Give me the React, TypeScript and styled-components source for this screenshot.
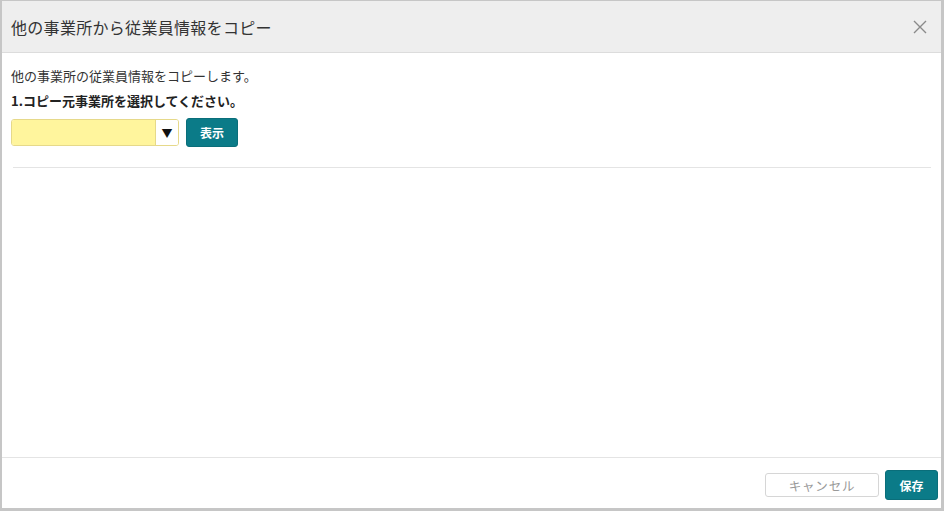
import React from "react";
import styled, { createGlobalStyle } from "styled-components";

const GlobalStyle = createGlobalStyle`
  html, body {
    margin: 0;
    padding: 0;
    background: #c6c6c6;
  }
  body {
    font-family: "Noto Sans CJK JP", "Liberation Sans", sans-serif;
    color: #333;
  }
`;

const Dialog = styled.div`
  box-sizing: border-box;
  width: 939px;
  height: 507px;
  margin: 1px 3px 3px 2px;
  background: #fff;
  display: flex;
  flex-direction: column;
`;

const Header = styled.div`
  box-sizing: border-box;
  height: 52px;
  flex: none;
  display: flex;
  align-items: center;
  justify-content: space-between;
  padding: 0 12px 0 9px;
  background: #eeeeee;
  border-bottom: 1px solid #dcdcdc;
`;

const Title = styled.h1`
  margin: 0;
  font-size: 16px;
  font-weight: 400;
  color: #333;
  letter-spacing: 0.3px;
`;

const CloseButton = styled.button`
  border: none;
  background: none;
  padding: 0;
  width: 18px;
  height: 18px;
  display: flex;
  align-items: center;
  justify-content: center;
  cursor: pointer;
`;

const Body = styled.div`
  flex: 1;
  padding: 14px 9px 0 9px;
  display: flex;
  flex-direction: column;
`;

const Lead = styled.p`
  margin: 0;
  font-size: 13px;
  line-height: 18px;
  color: #333;
`;

const Step = styled.p`
  margin: 7px 0 0 0;
  font-size: 13px;
  font-weight: 700;
  line-height: 18px;
  color: #222;
`;

const Controls = styled.div`
  display: flex;
  align-items: center;
  gap: 7px;
  margin-top: 8px;
`;

const SelectBox = styled.div`
  box-sizing: border-box;
  width: 168px;
  height: 27px;
  display: flex;
  border: 1px solid #e6d98a;
  border-radius: 3px;
  overflow: hidden;
`;

const SelectField = styled.div`
  flex: 1;
  background: #fff59d;
`;

const SelectArrow = styled.div`
  width: 22px;
  background: #fff;
  border-left: 1px solid #e6d98a;
  display: flex;
  align-items: center;
  justify-content: center;
  font-size: 11px;
  color: #111;
`;

const PrimaryButton = styled.button<{ $w: number; $h: number }>`
  box-sizing: border-box;
  width: ${(p) => p.$w}px;
  height: ${(p) => p.$h}px;
  border: 1px solid #0a6e7a;
  border-radius: 3px;
  background: #0b7b88;
  color: #fff;
  font-family: inherit;
  font-size: 12px;
  font-weight: 700;
  padding: 0;
  cursor: pointer;
`;

const Divider = styled.hr`
  margin: 20px 1px 0 2px;
  border: none;
  border-top: 1px solid #e4e4e4;
`;

const Footer = styled.div`
  box-sizing: border-box;
  height: 51px;
  flex: none;
  border-top: 1px solid #e4e4e4;
  display: flex;
  align-items: center;
  justify-content: flex-end;
  gap: 6px;
  padding: 4px 3px 0 0;
`;

const CancelButton = styled.button`
  box-sizing: border-box;
  width: 114px;
  height: 24px;
  border: 1px solid #d6d6d6;
  border-radius: 3px;
  background: #fff;
  color: #999;
  font-family: inherit;
  font-size: 12.5px;
  padding: 0;
  letter-spacing: 0.8px;
`;

export default function App() {
  return (
    <>
      <GlobalStyle />
      <Dialog>
        <Header>
          <Title>他の事業所から従業員情報をコピー</Title>
          <CloseButton aria-label="閉じる">
            <svg width="14" height="14" viewBox="0 0 14 14">
              <path d="M1 1L13 13M13 1L1 13" stroke="#8a8a8a" strokeWidth="1.4" />
            </svg>
          </CloseButton>
        </Header>
        <Body>
          <Lead>他の事業所の従業員情報をコピーします。</Lead>
          <Step>1.コピー元事業所を選択してください。</Step>
          <Controls>
            <SelectBox>
              <SelectField />
              <SelectArrow>▼</SelectArrow>
            </SelectBox>
            <PrimaryButton $w={52} $h={29}>表示</PrimaryButton>
          </Controls>
          <Divider />
        </Body>
        <Footer>
          <CancelButton>キャンセル</CancelButton>
          <PrimaryButton $w={53} $h={30}>保存</PrimaryButton>
        </Footer>
      </Dialog>
    </>
  );
}
